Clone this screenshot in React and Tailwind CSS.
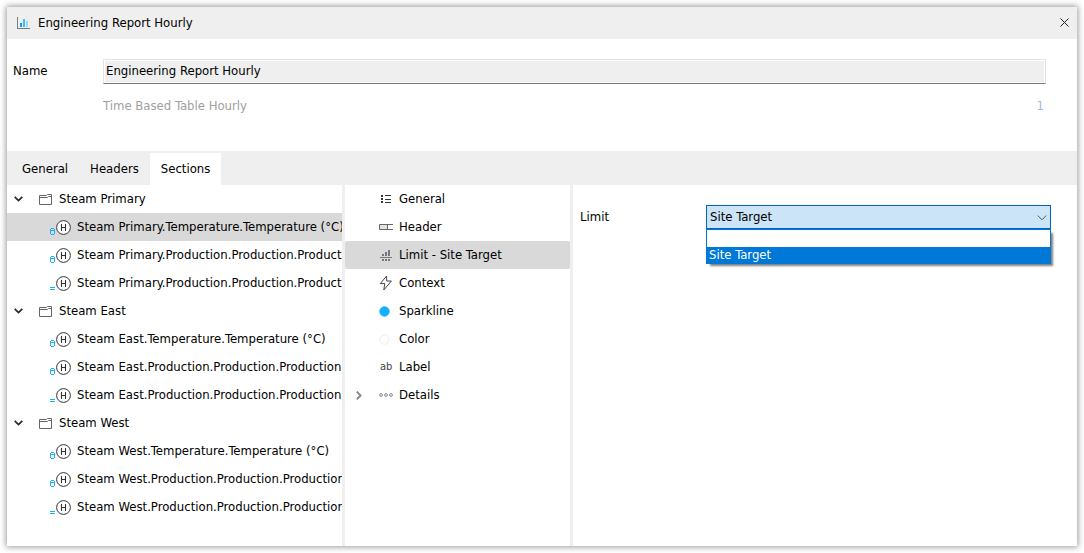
import { useState } from "react";
import clsx from "clsx";

const groups = [
  {
    name: "Steam Primary",
    items: [
      { icon: "tag", label: "Steam Primary.Temperature.Temperature (°C)" },
      { icon: "tag", label: "Steam Primary.Production.Production.Product" },
      { icon: "equals", label: "Steam Primary.Production.Production.Product" }
    ]
  },
  {
    name: "Steam East",
    items: [
      { icon: "tag", label: "Steam East.Temperature.Temperature (°C)" },
      { icon: "tag", label: "Steam East.Production.Production.Production." },
      { icon: "equals", label: "Steam East.Production.Production.Production." }
    ]
  },
  {
    name: "Steam West",
    items: [
      { icon: "tag", label: "Steam West.Temperature.Temperature (°C)" },
      { icon: "tag", label: "Steam West.Production.Production.Production" },
      { icon: "equals", label: "Steam West.Production.Production.Production" }
    ]
  }
];

const ReportIcon = () => (
  <svg width="14" height="12" viewBox="0 0 14 12" shapeRendering="crispEdges">
    <path d="M0 0h1v11h12v1H0z" fill="#7a7a7a" />
    <path d="M3 6h2v4H3z" fill="#00a2ff" />
    <path d="M6 2h2v8H6z" fill="#35bdff" />
    <path d="M9 4h2v6H9z" fill="#93dcff" />
  </svg>
);

const CloseIcon = () => (
  <svg width="9" height="9" viewBox="0 0 9 9" fill="none" stroke="#222">
    <path d="M.5.5l8 8M8.5.5l-8 8" />
  </svg>
);

const ExpandedIcon = () => (
  <svg width="9" height="6" viewBox="0 0 9 6" fill="none" stroke="#2b2b2b" strokeWidth="1.8">
    <path d="M.7.8l3.8 3.8L8.3.8" />
  </svg>
);

const CollapsedIcon = () => (
  <svg width="6" height="9" viewBox="0 0 6 9" fill="none" stroke="#858585" strokeWidth="1.8">
    <path d="M.8.7l3.8 3.8L.8 8.3" />
  </svg>
);

const FolderIcon = () => (
  <svg width="13" height="11" viewBox="0 0 13 11" fill="none" stroke="#666">
    <path d="M.5 1.5h7l1-1h4v10H.5zM.5 3.5h8l1-1h3" />
  </svg>
);

const TagIcon = () => (
  <svg width="5" height="7" viewBox="0 0 5 7" fill="none" stroke="#14b1fa">
    <path d="M1 .5h3M.5 1v5M4.5 1v5M1 2.5h3M1 6.5h3" />
  </svg>
);

const EqualsIcon = () => (
  <svg width="5" height="7" viewBox="0 0 5 7" stroke="#14b1fa">
    <path d="M0 3.5h5M0 5.5h5" />
  </svg>
);

const HourIcon = () => (
  <svg width="15" height="15" viewBox="0 0 15 15" fill="none" stroke="#333">
    <circle cx="7.5" cy="7.5" r="6.9" fill="#fff" strokeWidth="1" />
    <path d="M5.5 4v7M9.5 4v7M5.5 7.5h4" strokeWidth="1.1" />
  </svg>
);

const ListIcon = () => (
  <svg width="14" height="14" viewBox="0 0 14 14" fill="#333" shapeRendering="crispEdges">
    <path d="M2 3h2v2H2zM2 6h2v2H2zM2 9h2v2H2zM6 3h6v1H6zM6 7h6v1H6zM6 10h6v1H6z" />
  </svg>
);

const HeaderIcon = () => (
  <svg width="14" height="14" viewBox="0 0 14 14" fill="none" stroke="#666">
    <path d="M.5 4.5h8v5h-8z" fill="#e2e2e2" />
    <path d="M8 4.5h6M8 9.5h6" />
  </svg>
);

const LimitIcon = () => (
  <svg width="14" height="14" viewBox="0 0 14 14" fill="#777" shapeRendering="crispEdges">
    <path d="M3 6h2v2H3zM6 4h2v4H6zM9 2h2v6H9zM1 9h12v1H1zM3 11h2v2H3zM6 11h2v2H6zM9 11h2v2H9z" />
  </svg>
);

const ContextIcon = () => (
  <svg width="14" height="16" viewBox="0 0 14 16" fill="none" stroke="#444" strokeLinejoin="round">
    <path d="M7.6 1L1.3 8.6h4.5L4.8 15l7.6-9H7.7z" />
  </svg>
);

const DotIcon = ({ fill, stroke }) => (
  <svg width="14" height="14" viewBox="0 0 14 14">
    <circle cx="5.5" cy="7.5" r="4.7" fill={fill} stroke={stroke} />
  </svg>
);

const DetailsIcon = () => (
  <svg width="14" height="14" viewBox="0 0 14 14" fill="none" stroke="#888">
    <circle cx="2" cy="7" r="1.4" />
    <circle cx="7" cy="7" r="1.4" />
    <circle cx="12" cy="7" r="1.4" />
  </svg>
);

const options = [
  { label: "General", icon: <ListIcon /> },
  { label: "Header", icon: <HeaderIcon /> },
  { label: "Limit - Site Target", icon: <LimitIcon /> },
  { label: "Context", icon: <ContextIcon /> },
  { label: "Sparkline", icon: <DotIcon fill="#14b1fa" stroke="#14b1fa" /> },
  { label: "Color", icon: <DotIcon fill="#fff" stroke="#ececec" /> },
  { label: "Label", icon: <span className="pl-px text-[11px] leading-4 text-[#444]">ab</span> },
  { label: "Details", icon: <DetailsIcon />, expandable: true }
];

const tabs = ["General", "Headers", "Sections"];
const limits = ["", "Site Target"];

export default function App() {
  const [name, setName] = useState("Engineering Report Hourly");
  const [tab, setTab] = useState("Sections");
  const [item, setItem] = useState("Steam Primary-0");
  const [option, setOption] = useState("Limit - Site Target");
  const [limit, setLimit] = useState("Site Target");

  return (
    <div className="flex h-screen bg-white p-[7px] font-['DejaVu_Sans_Condensed','Noto_Sans',sans-serif] text-[13px] leading-5 text-black">
      <main className="flex min-w-0 grow flex-col bg-white shadow-[0_0_6px_1px_rgba(0,0,0,0.4)]">
        <header className="flex h-8 shrink-0 items-center gap-[7px] bg-[#efefef] pr-2 pl-2.5">
          <ReportIcon />
          <h1 className="grow">{name}</h1>
          <button type="button" aria-label="Close" className="pb-0.5">
            <CloseIcon />
          </button>
        </header>

        <section className="flex h-28 shrink-0 items-start pt-5 pr-[31px] pl-1.5">
          <label htmlFor="name" className="w-[90px] shrink-0 pt-0.5">
            Name
          </label>
          <div className="min-w-0 grow">
            <input
              id="name"
              value={name}
              onChange={(e) => setName(e.target.value)}
              className="block h-[25px] w-full border border-[#e3e3e3] border-b-[#7a7a7a] bg-[#efefef] px-0.5 pb-0.5 inset-ring inset-ring-white outline-none"
            />
            <div className="mt-3 flex justify-between pr-0.5 text-[#a0a0a0]">
              <span>Time Based Table Hourly</span>
              <span className="text-[#9dbbd8]">1</span>
            </div>
          </div>
        </section>

        <nav className="flex h-[34px] shrink-0 items-end bg-[#efefef] pl-1">
          {tabs.map((t) => (
            <button
              key={t}
              type="button"
              onClick={() => setTab(t)}
              className={clsx("h-8 px-[11px]", t === tab && "bg-white")}
            >
              {t}
            </button>
          ))}
        </nav>

        <div className="flex min-h-0 grow">
          <div className="w-[338px] shrink-0 overflow-hidden border-r-3 border-[#efefef]">
            {groups.map((group) => (
              <div key={group.name}>
                <div className="flex h-7 items-center pl-[7px]">
                  <button type="button" aria-label={group.name} className="w-[25px]">
                    <ExpandedIcon />
                  </button>
                  <FolderIcon />
                  <span className="pl-[7px]">{group.name}</span>
                </div>
                {group.items.map(({ icon, label }, i) => {
                  const key = `${group.name}-${i}`;
                  return (
                    <button
                      key={key}
                      type="button"
                      onClick={() => setItem(key)}
                      className={clsx("flex h-7 w-full items-center overflow-hidden pl-[43px]", key === item && "bg-[#d9d9d9]")}
                    >
                      <span className="flex shrink-0 items-end gap-px">
                        {icon === "tag" ? <TagIcon /> : <EqualsIcon />}
                        <HourIcon />
                      </span>
                      <span className="pl-1.5 whitespace-nowrap">{label}</span>
                    </button>
                  );
                })}
              </div>
            ))}
          </div>

          <div className="w-[228px] shrink-0 border-r-3 border-[#efefef]">
            {options.map(({ label, icon, expandable }) => (
              <button
                key={label}
                type="button"
                onClick={() => setOption(label)}
                className={clsx("flex h-7 w-full items-center rounded-xs pl-[11px]", label === option && "bg-[#d9d9d9]")}
              >
                <span className="w-[23px]">{expandable && <CollapsedIcon />}</span>
                <span className="flex w-5 items-center">{icon}</span>
                <span>{label}</span>
              </button>
            ))}
          </div>

          <div className="flex min-w-0 grow items-start pt-5 pr-[26px] pl-[7px]">
            <label htmlFor="limit" className="w-[126px] shrink-0 pt-0.5">
              Limit
            </label>
            <div className="relative min-w-0 grow">
              <select
                id="limit"
                value={limit}
                onChange={(e) => setLimit(e.target.value)}
                className="block h-6 w-full appearance-none border border-[#0067c0] bg-[#cce4f7] px-[3px] outline-none"
              >
                {limits.map((l) => (
                  <option key={l}>{l}</option>
                ))}
              </select>
              <svg className="pointer-events-none absolute top-2.5 right-1" width="10" height="6" viewBox="0 0 10 6" fill="none" stroke="#555">
                <path d="M.8.6L5 4.8 9.2.6" />
              </svg>
              <ul className="absolute top-full left-0 w-full border border-b-0 border-[#0078d7] bg-white shadow-[3px_3px_2px_-1px_rgba(0,0,0,0.5)]">
                {limits.map((l) => (
                  <li
                    key={l}
                    onClick={() => setLimit(l)}
                    className={clsx("h-[17px] px-0.5 leading-4", l === limit && "bg-[#0078d7] text-white")}
                  >
                    {l}
                  </li>
                ))}
              </ul>
            </div>
          </div>
        </div>
      </main>
    </div>
  );
}
